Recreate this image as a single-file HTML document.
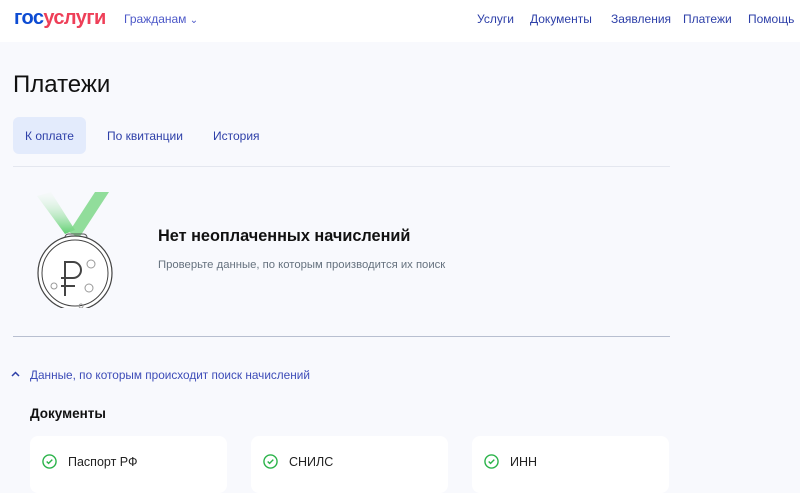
<!DOCTYPE html>
<html><head><meta charset="utf-8"><style>
body{margin:0;width:800px;height:493px;overflow:hidden;background:#f8f9fd;font-family:"Liberation Sans",sans-serif;position:relative}
.hdr{position:absolute;left:0;top:0;width:800px;height:42px;background:#fff}
.abs{position:absolute;white-space:nowrap}
.nav{color:#2d3fa8;font-size:12px;top:12px}
.card{position:absolute;top:436px;width:197px;height:57px;background:#fff;border-radius:8px}
.chk{position:absolute;left:12px;top:18px;width:15px;height:15px}
.card span{position:absolute;left:38px;top:19px;font-size:12.5px;color:#222}
</style></head><body>
<div class="hdr"></div>
<div class="abs" style="left:14px;top:7px;font-size:20px;font-weight:bold;letter-spacing:-0.6px"><span style="color:#0d4cd3">гос</span><span style="color:#ee3f58">услуги</span></div>
<div class="abs nav" style="left:124px;color:#4c58c8">Гражданам <span style="font-size:10px">&#8964;</span></div>
<div class="abs nav" style="left:477px">Услуги</div>
<div class="abs nav" style="left:530px">Документы</div>
<div class="abs nav" style="left:611px">Заявления</div>
<div class="abs nav" style="left:683px">Платежи</div>
<div class="abs nav" style="left:748px">Помощь</div>
<div class="abs" style="left:13px;top:71px;font-size:24px;color:#111">Платежи</div>
<div class="abs" style="left:13px;top:117px;width:73px;height:37px;background:#e3ebfc;border-radius:6px"></div>
<div class="abs nav" style="left:25px;top:129px">К оплате</div>
<div class="abs nav" style="left:107px;top:129px">По квитанции</div>
<div class="abs nav" style="left:213px;top:129px">История</div>
<div class="abs" style="left:13px;top:166px;width:657px;height:1px;background:#e4e7ef"></div>
<svg class="abs" style="left:25px;top:188px" width="95" height="120" viewBox="0 0 95 120">
<defs><linearGradient id="g" x1="0" y1="0" x2="0" y2="1"><stop offset="0" stop-color="#e6f7e6" stop-opacity="0.1"/><stop offset="1" stop-color="#5fcf70"/></linearGradient></defs>
<path d="M12 8 L26 4 L50 42 L40 46 Z" fill="url(#g)"/>
<path d="M70 4 L84 4 L54 50 L44 44 Z" fill="#7fd88a" opacity="0.85"/>
<rect x="40" y="46" width="22" height="7" rx="3.5" fill="none" stroke="#555" stroke-width="1"/>
<circle cx="50" cy="85" r="37" fill="#fff" stroke="#444" stroke-width="1.2"/>
<circle cx="50" cy="85" r="33" fill="none" stroke="#444" stroke-width="1"/>
<path d="M40 108 V74 H48 A8 8 0 0 1 48 90 H36 M36 98 H50" fill="none" stroke="#444" stroke-width="2"/>
<circle cx="66" cy="76" r="4" fill="none" stroke="#999"/><circle cx="64" cy="100" r="4" fill="none" stroke="#999"/><circle cx="29" cy="98" r="3" fill="none" stroke="#999"/><circle cx="56" cy="118" r="2" fill="none" stroke="#999"/>
</svg>
<div class="abs" style="left:158px;top:227px;font-size:16.3px;font-weight:bold;color:#111">Нет неоплаченных начислений</div>
<div class="abs" style="left:158px;top:259px;font-size:11.3px;color:#66727f">Проверьте данные, по которым производится их поиск</div>
<div class="abs" style="left:13px;top:336px;width:657px;height:1px;background:#b8bfd0"></div>
<svg class="abs" style="left:11px;top:371px" width="9" height="6"><path d="M1 5 L4.5 1.5 L8 5" fill="none" stroke="#2d3fa8" stroke-width="1.5"/></svg>
<div class="abs nav" style="left:30px;top:368px;font-size:11.8px;color:#3d4cb8">Данные, по которым происходит поиск начислений</div>
<div class="abs" style="left:30px;top:406px;font-size:13.5px;font-weight:bold;color:#111">Документы</div>
<div class="card" style="left:30px"><svg class="chk" viewBox="0 0 16 16"><circle cx="8" cy="8" r="7" fill="none" stroke="#2bb34a" stroke-width="1.5"/><path d="M5 8 L7 10 L11 6" fill="none" stroke="#2bb34a" stroke-width="1.5"/></svg><span>Паспорт РФ</span></div>
<div class="card" style="left:251px"><svg class="chk" viewBox="0 0 16 16"><circle cx="8" cy="8" r="7" fill="none" stroke="#2bb34a" stroke-width="1.5"/><path d="M5 8 L7 10 L11 6" fill="none" stroke="#2bb34a" stroke-width="1.5"/></svg><span>СНИЛС</span></div>
<div class="card" style="left:472px"><svg class="chk" viewBox="0 0 16 16"><circle cx="8" cy="8" r="7" fill="none" stroke="#2bb34a" stroke-width="1.5"/><path d="M5 8 L7 10 L11 6" fill="none" stroke="#2bb34a" stroke-width="1.5"/></svg><span>ИНН</span></div>
</body></html>
